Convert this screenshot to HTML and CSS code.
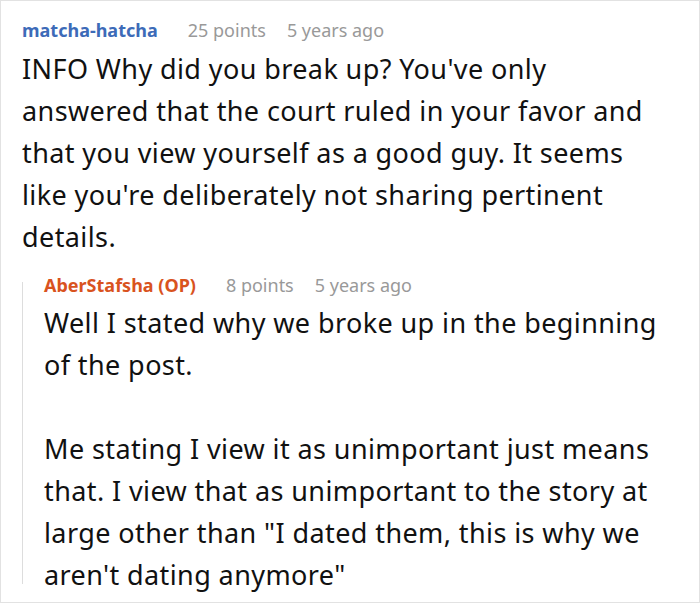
FILE: index.html
```html
<!DOCTYPE html>
<html>
<head>
<meta charset="utf-8">
<link rel="stylesheet" href="styles.css">
</head>
<body>
<div class="frame">
  <div class="comment">
    <div class="meta">
      <span class="author">matcha-hatcha</span>
      <span class="info">25 points</span>
      <span class="info">5 years ago</span>
    </div>
    <p class="body">INFO Why did you break up? You've only answered that the court ruled in your favor and that you view yourself as a good guy. It seems like you're deliberately not sharing pertinent details.</p>
    <div class="reply">
      <div class="meta">
        <span class="author op">AberStafsha (OP)</span>
        <span class="info">8 points</span>
        <span class="info">5 years ago</span>
      </div>
      <p class="body">Well I stated why we broke up in the beginning of the post.</p>
      <p class="body">Me stating I view it as unimportant just means that. I view that as unimportant to the story at large other than "I dated them, this is why we aren't dating anymore"</p>
    </div>
  </div>
</div>
</body>
</html>
```
FILE: styles.css
```css
html, body {
  margin: 0;
  padding: 0;
  background: #fff;
}
.frame {
  width: 700px;
  height: 603px;
  box-sizing: border-box;
  border: 1px solid #e2e2e2;
  overflow: hidden;
  font-family: "Noto Sans", sans-serif;
  color: #111;
}
.comment {
  padding: 14px 34px 0 21px;
}
.meta {
  display: flex;
  gap: 21px;
  align-items: baseline;
  font-size: 18px;
  line-height: 30px;
  margin-bottom: 3px;
}
.author {
  font-weight: bold;
  color: #3d6bb8;
  margin-right: 9px;
}
.author.op {
  color: #d9531e;
}
.info {
  color: #999;
}
.body {
  margin: 0;
  font-size: 27px;
  line-height: 42px;
  letter-spacing: 0.4px;
}
.reply {
  position: relative;
  margin-top: 12px;
  padding-left: 22px;
}
.reply::before {
  content: "";
  position: absolute;
  left: 0;
  top: 12px;
  bottom: 12px;
  width: 1px;
  background: #ddd;
}
.reply .meta {
  margin-bottom: 2px;
}
.reply .body + .body {
  margin-top: 42px;
}
```
